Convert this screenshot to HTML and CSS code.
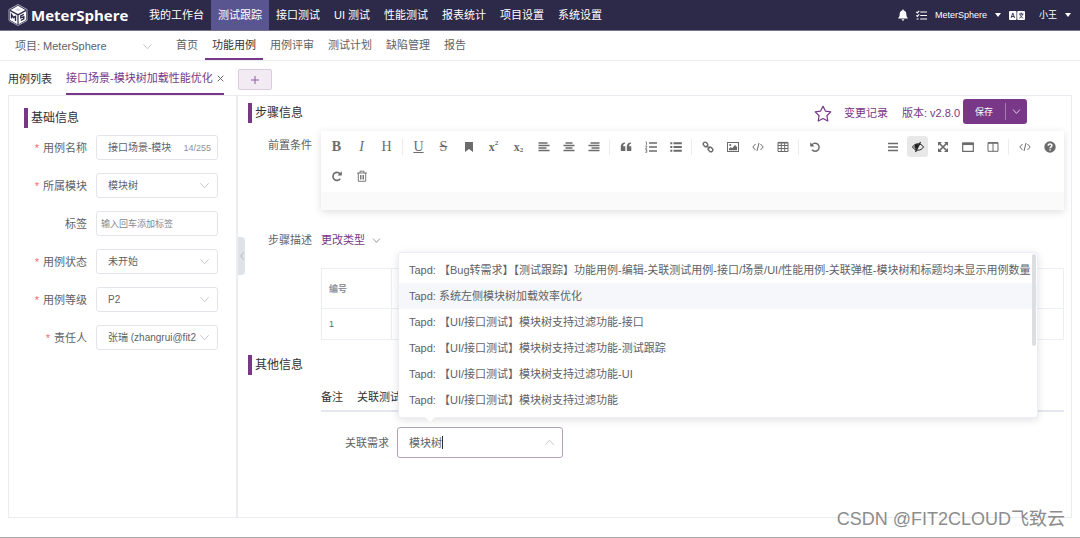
FILE: index.html
```html
<!DOCTYPE html>
<html lang="zh-CN">
<head>
    <meta charset="UTF-8">
    <meta name="viewport" content="width=device-width, initial-scale=1.0">
    <title>MeterSphere</title>
    <link rel="stylesheet" href="styles.css">
</head>
<body>
<!-- 公用图标 -->
<svg class="icon-defs" aria-hidden="true">
    <symbol id="down" viewBox="0 0 12 12"><path d="M1.5 3.5 6 8.5l4.5-5" fill="none" stroke="currentColor"/></symbol>
    <symbol id="code" viewBox="0 0 12 12"><path d="M3.5 3 .8 6l2.7 3M8.5 3l2.7 3-2.7 3M7 2 5 10" fill="none" stroke="currentColor"/></symbol>
</svg>

<header class="top-bar">
    <a class="logo" href="#">
        <svg width="20" height="22" viewBox="0 0 20 22">
            <path d="M10 .5 19 5.5v11l-9 5-9-5v-11z" fill="none" stroke="#aaa7c0"/>
            <path d="M10 1.8 17.4 6 10 10 2.6 6zM2 7.2l7.4 4v9L2 16zM18 7.2l-7.4 4v9L18 16z" fill="#fff"/>
            <path d="M3.5 14.5v-4l2 3 2-1v4.5M15.8 10.4l-3 1.6v1.8l3-1v2l-3 1.7" fill="none" stroke="#2d2a49" stroke-width="1.4"/>
            <path d="m7 5.8 3-1.6 3 1.6-3 1.5z" fill="#d9d7e5"/>
        </svg>
        <span>MeterSphere</span>
    </a>
    <nav class="main-nav">
        <a href="#">我的工作台</a>
        <a href="#" class="active">测试跟踪</a>
        <a href="#">接口测试</a>
        <a href="#">UI 测试</a>
        <a href="#">性能测试</a>
        <a href="#">报表统计</a>
        <a href="#">项目设置</a>
        <a href="#">系统设置</a>
    </nav>
    <div class="user-bar">
        <button type="button" aria-label="通知"><svg width="10" height="12" viewBox="0 0 10 12"><path d="M5 .5c.6 0 .8.4.8.9C7.500 1.800 8.300 3.200 8.300 4.800c0 2.400.5 3.200 1.500 4.200v.6H.2V9c1-1 1.500-1.800 1.500-4.200 0-1.600.8-3 2.500-3.400 0-.5.2-.9.8-.9zM3.700 10.300h2.600C6.300 11.200 5.700 11.700 5 11.700s-1.300-.5-1.300-1.400z" fill="#fff"/></svg></button>
        <button type="button" aria-label="任务"><svg width="11" height="11" viewBox="0 0 11 11"><path d="M4.200 2H11M4.200 5.500H11M4.200 9H11M.3 1.800l1 1L3.200.8M.3 5.300l1 1 1.900-2M.6 9h2" fill="none" stroke="#fff" stroke-width="1.200"/></svg></button>
        <button type="button" class="workspace">MeterSphere<i class="caret"></i></button>
        <button type="button" class="lang" aria-label="语言"><svg width="16" height="9" viewBox="0 0 16 9"><rect width="7.500" height="9" rx="1" fill="#fff"/><rect x="8.200" width="7.800" height="9" rx="1" fill="#fff"/><path d="M2 7l1.800-5 1.800 5M2.600 5.500h2.500M10 3h4.500M12.200 1.500V3M10.300 7.200C12 6.500 13.200 5 13.500 3M11 3.500c.5 1.800 1.800 3 3.200 3.700" fill="none" stroke="#2d2a49" stroke-width=".9"/></svg></button>
        <button type="button">小王<i class="caret"></i></button>
    </div>
</header>

<div class="sub-bar">
    <div class="project">
        <label for="project">项目:</label>
        <select id="project"><option>MeterSphere</option></select>
        <svg class="arrow"><use href="#down"/></svg>
    </div>
    <nav class="sub-nav">
        <a href="#">首页</a>
        <a href="#" class="active">功能用例</a>
        <a href="#">用例评审</a>
        <a href="#">测试计划</a>
        <a href="#">缺陷管理</a>
        <a href="#">报告</a>
    </nav>
</div>

<div class="page-tabs">
    <a href="#">用例列表</a>
    <a href="#" class="active">接口场景-模块树加载性能优化
        <svg width="7" height="7" viewBox="0 0 7 7"><path d="m.7.7 5.600 5.600M6.300.7.7 6.300" stroke="#666"/></svg>
    </a>
    <button type="button" class="add-tab" aria-label="新增"><svg width="8" height="8" viewBox="0 0 8 8"><path d="M4 0v8M0 4h8" stroke="#8a5a98"/></svg></button>
</div>

<main class="workspace-panel">
    <aside class="base-info">
        <h2>基础信息</h2>
        <form>
            <div class="form-row">
                <label class="required" for="name">用例名称</label>
                <div class="field">
                    <input type="text" id="name" value="接口场景-模块树加载性能优化">
                    <span class="count">14/255</span>
                </div>
            </div>
            <div class="form-row">
                <label class="required" for="module">所属模块</label>
                <div class="field">
                    <select id="module"><option>模块树</option></select>
                    <svg class="arrow"><use href="#down"/></svg>
                </div>
            </div>
            <div class="form-row">
                <label for="tags">标签</label>
                <div class="field tags"><input type="text" id="tags" placeholder="输入回车添加标签"></div>
            </div>
            <div class="form-row">
                <label class="required" for="status">用例状态</label>
                <div class="field">
                    <select id="status"><option>未开始</option></select>
                    <svg class="arrow"><use href="#down"/></svg>
                </div>
            </div>
            <div class="form-row">
                <label class="required" for="level">用例等级</label>
                <div class="field">
                    <select id="level"><option>P2</option></select>
                    <svg class="arrow"><use href="#down"/></svg>
                </div>
            </div>
            <div class="form-row">
                <label class="required" for="owner">责任人</label>
                <div class="field">
                    <select id="owner"><option>张瑞 (zhangrui@fit2</option></select>
                    <svg class="arrow"><use href="#down"/></svg>
                </div>
            </div>
        </form>
    </aside>

    <section class="detail">
        <button type="button" class="collapse" aria-label="收起"><svg width="4" height="8" viewBox="0 0 4 8"><path d="M3.500.5.8 4l2.700 3.500" fill="none" stroke="#b3b9c2"/></svg></button>
        <div class="detail-head">
            <h2>步骤信息</h2>
            <div class="actions">
                <button type="button" class="star" aria-label="关注"><svg width="18" height="17" viewBox="0 0 18 17"><path d="m9 1.200 2.400 4.900 5.400.8-3.900 3.800.9 5.300L9 13.500 4.200 16l.9-5.300L1.200 6.900l5.400-.8z" fill="none" stroke="#783887" stroke-width="1.200" stroke-linejoin="round"/></svg></button>
                <a href="#">变更记录</a>
                <a href="#" class="version">版本: v2.8.0</a>
                <div class="save-group">
                    <button type="button" class="save">保存</button>
                    <button type="button" class="save-more" aria-label="更多"><svg width="9" height="9"><use href="#down"/></svg></button>
                </div>
            </div>
        </div>

        <div class="detail-row">
            <span class="row-label">前置条件</span>
            <div class="editor">
                <div class="toolbar">
                    <div class="tool-line">
                        <button type="button" class="bold">B</button>
                        <button type="button" class="italic">I</button>
                        <button type="button">H</button>
                        <i class="sep"></i>
                        <button type="button" class="underline">U</button>
                        <button type="button" class="strike">S</button>
                        <button type="button" aria-label="标记"><svg viewBox="0 0 12 12"><path d="M2 1h8v10L6 8l-4 3z" fill="currentColor"/></svg></button>
                        <button type="button" class="script">x<sup>2</sup></button>
                        <button type="button" class="script">x<sub>2</sub></button>
                        <button type="button" aria-label="居左"><svg viewBox="0 0 12 12"><path d="M.5 2h9M.5 4.500h11M.5 7h8M.5 9.500h11" stroke="currentColor" stroke-width="1.600"/></svg></button>
                        <button type="button" aria-label="居中"><svg viewBox="0 0 12 12"><path d="M2.500 2h7M.5 4.500h11M2.500 7h7M.5 9.500h11" stroke="currentColor" stroke-width="1.600"/></svg></button>
                        <button type="button" aria-label="居右"><svg viewBox="0 0 12 12"><path d="M2.500 2h9M.5 4.500h11M3.500 7h8M.5 9.500h11" stroke="currentColor" stroke-width="1.600"/></svg></button>
                        <i class="sep"></i>
                        <button type="button" aria-label="引用"><svg viewBox="0 0 12 12"><path d="M5 1.500v1.300C3.800 3 3.100 4 3.100 5.200H5.300V10H.8V5.500C.8 3.200 2.200 1.600 5 1.500zM11 1.500v1.300C9.800 3 9.100 4 9.100 5.200h2.200V10H6.800V5.500c0-2.300 1.400-3.900 4.200-4z" fill="currentColor"/></svg></button>
                        <button type="button" aria-label="有序列表"><svg viewBox="0 0 12 12"><path d="M4 2h8M4 6h8M4 10h8" stroke="currentColor" stroke-width="1.300"/><path d="M.5 1h1v3M.3 5h1.500v1L.4 7.300h1.700M.3 8.600h1.500v2.800H.3M.8 10h1" fill="none" stroke="currentColor" stroke-width=".8"/></svg></button>
                        <button type="button" aria-label="无序列表"><svg viewBox="0 0 12 12"><path d="M3.500 2.200h8.300M3.500 6h8.300M3.500 9.800h8.300M.3 2.200h2M.3 6h2M.3 9.800h2" stroke="currentColor" stroke-width="1.900"/></svg></button>
                        <i class="sep"></i>
                        <button type="button" aria-label="链接"><svg viewBox="0 0 12 12"><g fill="none" stroke="currentColor" stroke-width="1.400"><rect x="1" y="1.500" width="5" height="3.800" rx="1.900" transform="rotate(45 3.500 3.400)"/><rect x="6" y="6.500" width="5" height="3.800" rx="1.900" transform="rotate(45 8.500 8.400)"/><path d="m4.500 4.500 3 3"/></g></svg></button>
                        <button type="button" aria-label="图片"><svg viewBox="0 0 12 12"><rect x=".5" y="1.500" width="11" height="9" fill="none" stroke="currentColor"/><circle cx="3.200" cy="4" r="1.100" fill="currentColor"/><path d="M2 9.200V7.500L4 6l1.200 1.200L8 4l2 2v3.200z" fill="currentColor"/></svg></button>
                        <button type="button" aria-label="代码"><svg><use href="#code"/></svg></button>
                        <button type="button" aria-label="表格"><svg viewBox="0 0 12 12"><path d="M1 1.500h10v9H1zM1 4.500h10M1 7.500h10M4.300 1.500v9M7.700 1.500v9" fill="none" stroke="currentColor"/><path d="M1 1.700h10" stroke="currentColor" stroke-width="1.600"/></svg></button>
                        <i class="sep"></i>
                        <button type="button" aria-label="撤销"><svg viewBox="0 0 12 12"><path d="M2.500 4.500A4 4 0 1 1 3 8.800" fill="none" stroke="currentColor" stroke-width="1.500"/><path d="M1.200 1.200v4.300h4.300z" fill="currentColor"/></svg></button>
                        <div class="tool-right">
                            <button type="button" aria-label="目录"><svg viewBox="0 0 12 12"><path d="M1 2.500h10M1 6h10M1 9.500h10" stroke="currentColor" stroke-width="1.400"/></svg></button>
                            <button type="button" class="on" aria-label="预览"><svg viewBox="0 0 12 12"><path d="M.5 6C3 1.700 9 1.700 11.500 6 9 10.300 3 10.300.5 6z" fill="none" stroke="currentColor"/><path d="M6 3.200a2.600 2.600 0 0 0-1.800 5L7.500 3.500z" fill="currentColor"/><path d="m8.500 1-5 10" stroke="currentColor" stroke-width="1.300"/></svg></button>
                            <button type="button" aria-label="全屏"><svg viewBox="0 0 12 12"><path d="m2 2 8 8M10 2l-8 8" stroke="currentColor" stroke-width="1.700"/><path d="M1 1h4L1 5zM11 1v4L7 1zM1 11V7l4 4zM11 11H7l4-4z" fill="currentColor"/></svg></button>
                            <button type="button" aria-label="窗口"><svg viewBox="0 0 12 12"><path d="M.7 2h10.600v8.300H.7z" fill="none" stroke="currentColor" stroke-width="1.200"/><path d="M.5 2.800h11" stroke="currentColor" stroke-width="2.500"/></svg></button>
                            <button type="button" aria-label="双栏"><svg viewBox="0 0 12 12"><path d="M1 1.700h10v8.600H1zM6 1.700v8.600" fill="none" stroke="currentColor"/><path d="M1 2h10" stroke="currentColor" stroke-width="1.500"/></svg></button>
                            <i class="sep"></i>
                            <button type="button" aria-label="源码"><svg><use href="#code"/></svg></button>
                            <button type="button" aria-label="帮助"><svg viewBox="0 0 12 12"><circle cx="6" cy="6" r="5.700" fill="currentColor"/><path d="M4.200 4.800C4.200 2.400 7.900 2.500 7.900 4.600 7.900 5.900 6.100 5.800 6.100 7.300M6.100 8.200v1.400" fill="none" stroke="#fff" stroke-width="1.500"/></svg></button>
                        </div>
                    </div>
                    <div class="tool-line">
                        <button type="button" aria-label="重做"><svg viewBox="0 0 12 12"><path d="M9.500 4.500A4 4 0 1 0 9.300 8.600" fill="none" stroke="currentColor" stroke-width="1.600"/><path d="M10.800 1.200v4.300H6.500z" fill="currentColor"/></svg></button>
                        <button type="button" aria-label="清空"><svg viewBox="0 0 12 12"><path d="M1 3h10M4 3V1.200h4V3M2.300 3v8.300h7.400V3M4.500 5v4.500M6 5v4.500M7.500 5v4.500" fill="none" stroke="currentColor" stroke-width=".9"/></svg></button>
                    </div>
                </div>
                <div class="editor-body"></div>
            </div>
        </div>

        <div class="detail-row step-row">
            <span class="row-label">步骤描述</span>
            <button type="button" class="change-type">更改类型<svg width="9" height="9"><use href="#down"/></svg></button>
        </div>

        <table class="steps">
            <thead><tr><th class="num">编号</th><th></th></tr></thead>
            <tbody><tr><td>1</td><td></td></tr></tbody>
        </table>

        <h2>其他信息</h2>
        <div class="other-tabs">
            <a href="#">备注</a>
            <a href="#">关联测试</a>
        </div>
        <div class="demand-row">
            <label for="demand">关联需求</label>
            <div class="demand">
                <input type="text" id="demand" value="模块树">
                <i class="text-caret"></i>
                <svg class="arrow up"><use href="#down"/></svg>
                <ul class="options">
                    <li>Tapd: 【Bug转需求】【测试跟踪】功能用例-编辑-关联测试用例-接口/场景/UI/性能用例-关联弹框-模块树和标题均未显示用例数量</li>
                    <li class="hover">Tapd: 系统左侧模块树加载效率优化</li>
                    <li>Tapd: 【UI/接口测试】模块树支持过滤功能-接口</li>
                    <li>Tapd: 【UI/接口测试】模块树支持过滤功能-测试跟踪</li>
                    <li>Tapd: 【UI/接口测试】模块树支持过滤功能-UI</li>
                    <li>Tapd: 【UI/接口测试】模块树支持过滤功能</li>
                </ul>
            </div>
        </div>
    </section>
</main>
<div class="watermark">CSDN @FIT2CLOUD飞致云</div>
</body>
</html>
```
FILE: styles.css
```css
* {
    box-sizing: border-box;
}

body {
    margin: 0;
    min-height: 100vh;
    display: flex;
    flex-direction: column;
    font-family: "Liberation Sans", "Noto Sans CJK SC", sans-serif;
    font-size: 11px;
    line-height: 16px;
    color: #606266;
    background: #fff;
    border-bottom: 1px solid #a9a9a9;
}

a {
    color: inherit;
    text-decoration: none;
}

button, input, select {
    font: inherit;
    color: inherit;
    margin: 0;
    padding: 0;
    border: none;
    background: none;
    outline: none;
}

button {
    cursor: pointer;
}

svg {
    flex: none;
}

h2 {
    margin: 0;
    padding-left: 3px;
    border-left: 4px solid #783887;
    font-size: 12px;
    font-weight: normal;
    line-height: 20px;
    color: #303133;
}

.icon-defs {
    display: none;
}

.arrow {
    position: absolute;
    right: 7px;
    top: 6px;
    width: 11px;
    height: 11px;
    color: #c0c4cc;
    pointer-events: none;
}

/* 顶部导航 */
.top-bar {
    display: flex;
    align-items: center;
    height: 31px;
    padding: 0 9px 0 8px;
    background: #2d2a49;
    border-bottom: 1px solid #77748b;
    color: #fff;
}

.logo {
    display: flex;
    align-items: center;
    gap: 3px;
    width: 134px;
    height: 28px;
    font-family: "Open Sans", sans-serif;
    font-size: 15px;
    font-weight: bold;
}

.main-nav {
    display: flex;
    flex: 1;
}

.main-nav a {
    padding: 0 7px;
    line-height: 30px;
}

.main-nav .active {
    background: #595591;
}

.user-bar {
    display: flex;
    align-items: center;
    gap: 8px;
    font-size: 9px;
}

.user-bar button {
    display: flex;
    align-items: center;
    gap: 8px;
}

.user-bar .lang {
    margin-right: 6px;
}

.caret {
    border: 3px solid transparent;
    border-top: 4px solid #fff;
    border-bottom: none;
}

/* 二级导航 */
.sub-bar {
    display: flex;
    height: 30px;
    border-bottom: 1px solid #ebedf0;
}

.project {
    position: relative;
    display: flex;
    align-items: center;
    gap: 3px;
    width: 160px;
    margin-right: 9px;
    padding-left: 15px;
}

.project select {
    flex: 1;
    appearance: none;
}

.project .arrow {
    top: 10px;
}

.sub-nav {
    display: flex;
}

.sub-nav a {
    padding: 0 7px;
    line-height: 29px;
}

.sub-nav .active {
    color: #303133;
    border-bottom: 2px solid #783887;
}

/* 页签 */
.page-tabs {
    display: flex;
    align-items: center;
    gap: 14px;
    height: 34px;
    padding: 0 8px;
}

.page-tabs a {
    padding-top: 2px;
    line-height: 32px;
    color: #303133;
}

.page-tabs .active {
    display: flex;
    align-items: center;
    gap: 4px;
    height: 34px;
    color: #783887;
    border-bottom: 2px solid #783887;
}

.add-tab {
    display: flex;
    align-items: center;
    justify-content: center;
    width: 34px;
    height: 21px;
    margin-top: 3px;
    background: #f2ebf4;
    border: 1px solid #dccbe0;
    border-radius: 2px;
}

/* 主体 */
.workspace-panel {
    display: flex;
    flex: 1;
    margin: 0 8px 19px;
    border: 1px solid #ebebf2;
}

.base-info {
    width: 229px;
    padding: 12px 18px 0 15px;
    border-right: 2px solid #ebedf0;
}

.base-info form {
    padding-top: 7px;
}

.form-row {
    display: flex;
    align-items: center;
    margin-bottom: 13px;
}

.form-row label {
    width: 63px;
    margin-right: 9px;
    text-align: right;
}

.required::before {
    content: "*";
    margin-right: 4px;
    color: #f56c6c;
}

.field {
    position: relative;
    display: flex;
    align-items: center;
    flex: 1;
    min-width: 0;
    height: 25px;
    padding: 0 6px 0 11px;
    border: 1px solid #e3e5ea;
    border-radius: 3px;
    font-size: 10px;
}

.field input, .field select {
    flex: 1;
    min-width: 0;
    width: 100%;
    appearance: none;
}

.field select {
    margin-right: 14px;
}

.tags {
    padding-left: 4px;
    font-size: 9px;
}

.tags input::placeholder {
    color: #85888e;
}

.count {
    margin-left: 11px;
    font-size: 9px;
    color: #909399;
}

.detail {
    position: relative;
    flex: 1;
    min-width: 0;
    padding: 3px 7px 0 10px;
}

.collapse {
    position: absolute;
    left: 0;
    top: 141px;
    width: 7px;
    height: 38px;
    display: flex;
    align-items: center;
    justify-content: center;
    background: #dfe3e8;
    border-radius: 0 4px 4px 0;
}

.detail-head {
    display: flex;
    justify-content: space-between;
    align-items: center;
    padding-right: 37px;
    height: 28px;
}

.actions {
    display: flex;
    align-items: center;
    gap: 12px;
    color: #783887;
}

.star {
    display: flex;
}

.version {
    margin: 0 -9px 0 2px;
}

.save-group {
    display: flex;
    height: 25px;
    margin-bottom: 3px;
    background: #783887;
    border-radius: 3px;
    color: #fff;
    font-size: 9px;
}

.save {
    width: 42px;
}

.save-more {
    display: flex;
    align-items: center;
    justify-content: center;
    width: 22px;
    margin: 4px 0;
    border-left: 1px solid #a67bb0;
}

.detail-row {
    display: flex;
    align-items: flex-start;
}

.row-label {
    width: 64px;
    margin-right: 9px;
    padding-top: 10px;
    text-align: right;
}

.editor {
    flex: 1;
    margin-top: 4px;
    box-shadow: 0 2px 8px rgba(0, 0, 0, 0.13);
}

.toolbar {
    padding: 1px 2px 2px 3px;
}

.tool-line {
    display: flex;
    align-items: center;
    height: 29px;
}

.toolbar button {
    display: flex;
    align-items: center;
    justify-content: center;
    width: 21px;
    height: 21px;
    margin: 0 2px;
    border-radius: 3px;
    font-family: "Liberation Serif", serif;
    font-size: 14px;
    color: #6b6b6b;
}

.toolbar button svg {
    width: 12px;
    height: 12px;
}

.toolbar .bold {
    font-weight: bold;
}

.toolbar .italic {
    font-style: italic;
}

.toolbar .underline {
    text-decoration: underline;
}

.toolbar .strike {
    text-decoration: line-through;
}

.toolbar .script {
    font-size: 12px;
    font-weight: bold;
}

.script sup, .script sub {
    font-size: 7px;
    line-height: 7px;
}

.script sup {
    margin-bottom: 6px;
}

.script sub {
    margin-top: 8px;
}

.toolbar .on {
    background: #e8e8e8;
    color: #222;
}

.sep {
    width: 1px;
    height: 16px;
    margin: 0 3px;
    background: #ececec;
}

.tool-right {
    display: flex;
    align-items: center;
    margin-left: auto;
}

.editor-body {
    height: 18px;
    background: #fafafb;
}

.step-row {
    margin-top: 12px;
}

.change-type {
    display: flex;
    align-items: center;
    gap: 7px;
    padding-top: 10px;
    color: #783887;
}

.change-type svg {
    color: #777;
}

.steps {
    width: calc(100% - 73px);
    margin: 20px 0 15px 73px;
    border-collapse: collapse;
    table-layout: fixed;
    font-size: 9px;
    color: #909399;
}

.steps th, .steps td {
    padding: 0 7px;
    border: 1px solid #ebeef5;
    text-align: left;
}

.steps th {
    height: 40px;
}

.steps td {
    height: 31px;
    color: #606266;
}

.steps .num {
    width: 70px;
}

.other-tabs {
    display: flex;
    gap: 14px;
    margin: 9px 0 0 73px;
    height: 28px;
    line-height: 26px;
    color: #303133;
    border-bottom: 2px solid #e4e7ed;
}

.demand-row {
    display: flex;
    align-items: center;
    gap: 8px;
    margin: 15px 0 0 97px;
}

.demand {
    position: relative;
    display: flex;
    align-items: center;
    width: 166px;
    height: 31px;
    padding: 0 11px;
    border: 1px solid #b4a0ba;
    border-radius: 3px;
}

.demand input {
    width: 100%;
}

.text-caret {
    position: absolute;
    left: 44px;
    top: 8px;
    width: 1px;
    height: 13px;
    background: #303133;
}

.demand .up {
    top: 9px;
    transform: rotate(180deg);
}

/* 下拉选项 */
.options {
    position: absolute;
    left: 0;
    bottom: 39px;
    z-index: 2;
    width: 640px;
    margin: 0;
    padding: 4px 0;
    list-style: none;
    background: #fff;
    border: 1px solid #ebeef5;
    border-radius: 3px;
    box-shadow: 0 2px 9px rgba(0, 0, 0, 0.12);
}

.options::before {
    content: "";
    position: absolute;
    right: 1px;
    top: 1px;
    width: 4px;
    height: 92px;
    background: #dddee0;
    border-radius: 2px;
}

.options::after {
    content: "";
    position: absolute;
    left: 26px;
    top: 100%;
    border: 5px solid transparent;
    border-top-color: #fff;
    border-bottom: none;
}

.options li {
    padding-left: 10px;
    line-height: 26px;
    white-space: nowrap;
}

.options .hover {
    background: #f5f7fa;
}

.watermark {
    position: absolute;
    right: 15px;
    bottom: 7px;
    font-size: 18px;
    line-height: 24px;
    color: #8c8c8c;
}
```
